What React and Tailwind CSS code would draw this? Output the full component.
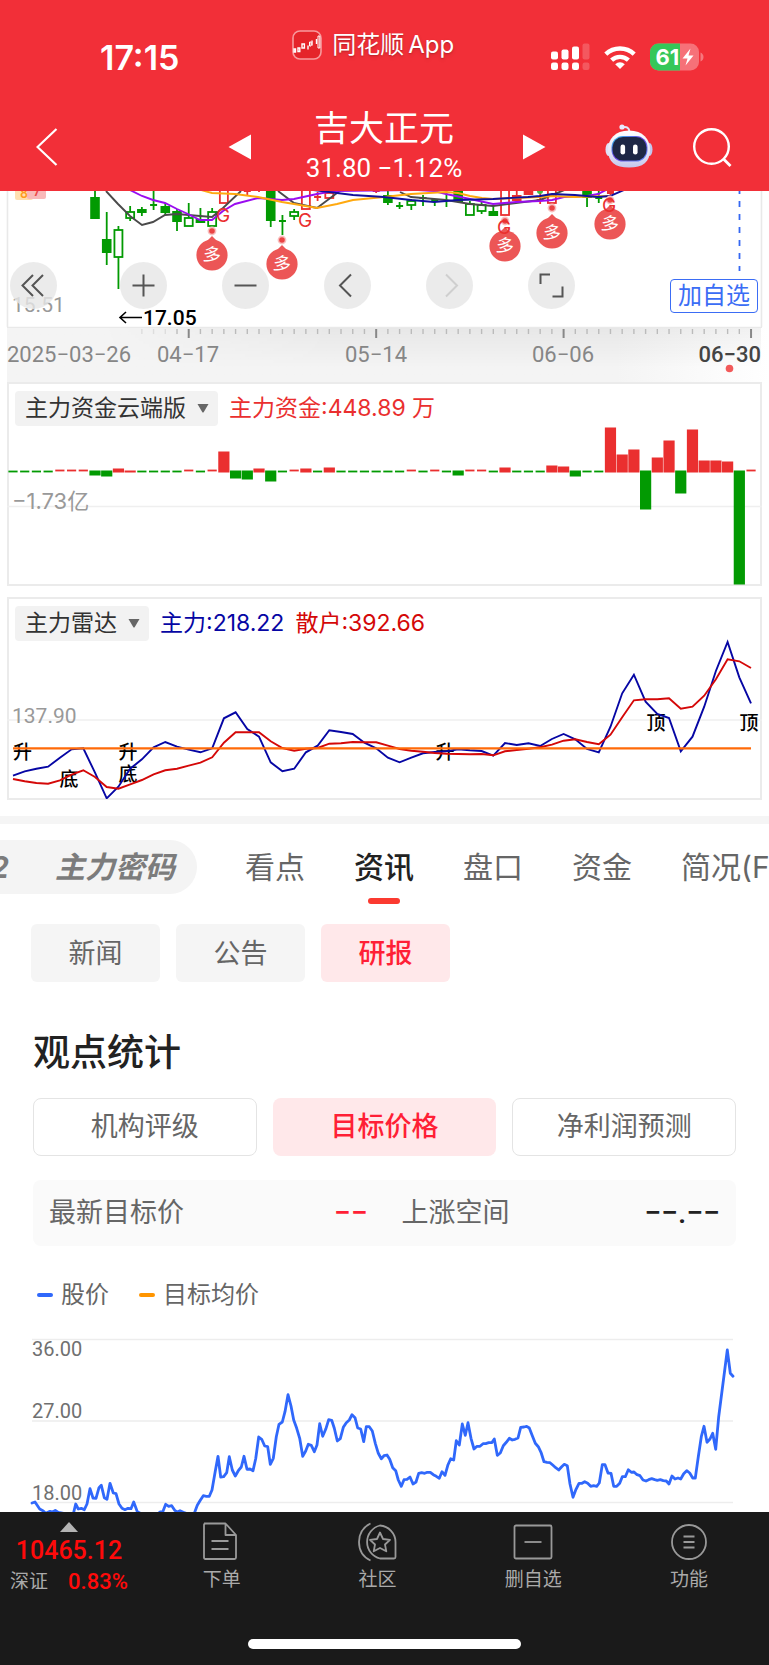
import React from "react";

const SANS = "font-['Inter','Noto_Sans_CJK_SC',sans-serif]";
const NUM = "font-['Roboto','Noto_Sans_CJK_SC',sans-serif]";

/* x position of the n-th trading day on the daily charts */
const dayX = (i) => 13 + i * 11.715;

/* [day, colour, wick top, wick bottom, body top, body bottom, style] */
const CANDLES = [
  [7, "g", 0, 28, 6, 28, "fill"],
  [8, "g", 21, 74, 48, 62, "fill"],
  [9, "g", 35, 98, 39, 66, "hollow"],
  [10, "g", 15, 30, 21, 27, "hollow"],
  [11, "g", 16, 25, 18, 22, "fill"],
  [12, "g", -2, 19, 13, 15, "cross"],
  [13, "g", 12, 24, 15, 22, "fill"],
  [14, "g", 18, 40, 20, 31, "fill"],
  [15, "g", 12, 34, 27, 35, "hollow"],
  [16, "g", 17, 32, 28, 32, "fill"],
  [17, "g", 17, 34, 21, 35, "hollow"],
  [18, "r", -4, -3, -5, 12, "hollow"],
  [20, "r", -5, 4, -4, 1, "cross"],
  [21, "r", -5, 1, -4, 0, "cross"],
  [22, "g", -5, 36, -5, 30, "fill"],
  [23, "g", 24, 44, 29, 31, "cross"],
  [24, "g", 18, 29, 21, 25, "hollow"],
  [25, "r", -5, 12, -5, 18, "hollow"],
  [26, "r", 1, 10, 5, 7, "cross"],
  [27, "r", -5, 6, 2, 7, "hollow"],
  [31, "r", -5, 2, -3, 1, "cross"],
  [32, "g", -3, 14, 4, 12, "fill"],
  [33, "g", 11, 18, 14, 16, "cross"],
  [34, "g", 8, 19, 10, 14, "hollow"],
  [35, "g", 4, 15, 6, 8, "cross"],
  [36, "g", 8, 15, 8, 10, "cross"],
  [37, "g", -2, 16, -4, 0, "cross"],
  [38, "g", -3, 11, -3, 11, "fill"],
  [39, "g", 10, 20, 13, 24, "hollow"],
  [40, "g", 11, 23, 14, 20, "hollow"],
  [41, "g", 15, 24, 20, 25, "fill"],
  [42, "r", -5, -4, -5, 24, "hollow"],
  [43, "r", 0, 10, 4, 10, "fill"],
  [44, "r", -5, 3, -5, 4, "fill"],
  [45, "r", 2, 13, 8, 10, "cross"],
  [46, "r", -5, -4, -5, 12, "hollow"],
  [49, "g", -5, 16, -5, 7, "fill"],
  [50, "g", -2, 12, 6, 8, "cross"],
  [51, "r", -5, 6, -5, 3, "cross"],
];

const AVERAGES = [
  ["#4a4a4a", "106,0 118,13 130,25 142,34 153,31 165,24 177,23 200,25 212,26 223,17 241,0"],
  ["#4a4a4a", "278,0 294,12 317,17 337,2 345,-4"],
  ["#4a4a4a", "400,1 411,6 446,9 470,13 493,15 516,12 540,9 557,2 567,-2"],
  ["#9a0cf0", "130,-1 142,5 153,9 165,12 177,18 188,23 200,29 212,29 223,20 235,13 258,7 282,9 294,8 317,3 334,0 417,-1 434,0 446,3 470,8 493,13 516,11 540,10 552,9 564,6 587,5 598,3 606,-1"],
  ["#ffa90f", "201,-1 212,2 235,3 258,6 282,11 294,13 317,17 337,13 353,9 384,6 411,3 446,1 458,2 470,5 482,7 493,8 516,7 540,6 552,5 575,6 610,5"],
  ["#10109c", "313,-1 353,4 384,6 411,9 434,11 458,9 493,8 528,6 540,5 552,3 575,4 598,6 610,5 624,-1"],
];

const PINS = [
  [212, 40, 64],
  [282, 49, 73],
  [505, 30, 55],
  [552, 17, 42],
  [610, 9, 33],
];

const G_MARKS = [[223, 31], [305, 36], [504, 43], [609, 21]];

function Candle({ c }) {
  const [i, tone, w1, w2, b1, b2, kind] = c;
  const x = dayX(i);
  const color = tone === "g" ? "#029a02" : "#ea2f2f";
  const half = 4;
  if (kind === "hollow") {
    return (
      <g stroke={color} strokeWidth="1.8" fill="none">
        {w1 < b1 && <path d={`M${x} ${w1}V${b1}`} />}
        {w2 > b2 && <path d={`M${x} ${b2}V${w2}`} />}
        <rect x={x - half} y={b1} width={half * 2} height={b2 - b1} />
      </g>
    );
  }
  const w = kind === "cross" ? 7 : 9.6;
  return (
    <g>
      <path d={`M${x} ${w1}V${w2}`} stroke={color} strokeWidth="1.8" />
      <rect x={x - w / 2} y={b1} width={w} height={b2 - b1} fill={color} />
    </g>
  );
}

function CandleChart() {
  return (
    <svg viewBox="0 0 769 137" className={`block w-full h-auto ${NUM}`} role="img" aria-label="日K线">
      <path d="M7.5 0V136M7 136.5H762M761.5 0V136" stroke="#e9e9e9" strokeWidth="1.6" fill="none" />
      <rect x="15" y="-4" width="18" height="13" rx="2" fill="#ffdfb0" />
      <rect x="27" y="-4" width="19" height="12" rx="2" fill="#f9b9b9" />
      <text x="20" y="7" fontSize="14" fontWeight="500" fill="#ff9a1f">8</text>
      <text x="33" y="5" fontSize="14" fontWeight="500" fill="#ea4a4a">7</text>
      {CANDLES.map((c) => <Candle key={c[0]} c={c} />)}
      <circle cx="540" cy="0" r="3" fill="#44b944" />
      {AVERAGES.map(([color, pts]) => (
        <polyline key={pts} points={pts} fill="none" stroke={color} strokeWidth="1.9" />
      ))}
      {PINS.map(([x, dot, cy]) => (
        <g key={x}>
          <circle cx={x} cy={dot} r="4.4" fill="#f8c0c0" />
          <circle cx={x} cy={dot} r="2.8" fill="#ea4444" />
          <path d={`M${x} ${cy - 19}L${x + 7} ${cy - 12}H${x - 7}Z`} fill="#ec5656" />
          <circle cx={x} cy={cy} r="15.6" fill="#ec5656" />
          <text x={x} y={cy + 6} fontSize="18" textAnchor="middle" fill="#fff" transform={`rotate(8 ${x} ${cy})`}>多</text>
        </g>
      ))}
      {G_MARKS.map(([x, y]) => (
        <text key={x} x={x} y={y} fontSize="19" textAnchor="middle" fill="#ea2f2f" className="font-['Inter',sans-serif]">G</text>
      ))}
      <path d="M739.5 0V80" stroke="#3568f2" strokeWidth="1.8" strokeDasharray="6 7" strokeDashoffset="3" />
      <text x="12" y="121" fontSize="21" fill="#999">15.51</text>
      <path d="M142 126.500H120M126 121L120 126.500L126 132" fill="none" stroke="#000" strokeWidth="1.6" />
      <text x="143" y="134" fontSize="21" fontWeight="500" fill="#000">17.05</text>
    </svg>
  );
}

function RoundButton({ label, muted, children }) {
  return (
    <button type="button" aria-label={label} className="flex size-[47px] items-center justify-center rounded-full bg-[#e6e6e6]/80">
      <svg viewBox="0 0 47 47" className="size-full" fill="none" stroke={muted ? "#cfcfcf" : "#555"} strokeWidth="2">
        {children}
      </svg>
    </button>
  );
}

function KLinePanel() {
  return (
    <section className="relative">
      <CandleChart />
      <div className="absolute inset-x-0 top-[71px] flex items-center gap-[55px] pl-[10px]">
        <div className="mr-2 flex"><RoundButton label="收起"><path d="M33 13L22.500 23.500L33 34M23 13L12.500 23.500L23 34" /></RoundButton></div>
        <RoundButton label="放大"><path d="M12.500 23.500H34.500M23.500 12.500V34.500" /></RoundButton>
        <RoundButton label="缩小"><path d="M12.500 23.500H34.500" /></RoundButton>
        <RoundButton label="向前"><path d="M27 12.500L16 23.500L27 34.500" /></RoundButton>
        <RoundButton label="向后" muted><path d="M20 12.500L31 23.500L20 34.500" /></RoundButton>
        <RoundButton label="全屏"><path d="M12.500 22V12.500H22M34.500 24.500V34.500H24.500" /></RoundButton>
      </div>
      <button type="button" className="absolute right-[11px] bottom-[15px] h-[34px] rounded-[4px] border border-[#3b6df5] bg-white px-[7px] text-2xl leading-8 text-[#3b6df5]">
        加自选
      </button>
    </section>
  );
}

function DateAxis() {
  const ticks = [];
  for (let i = 11; i < 64; i++) ticks.push(i);
  const major = [15, 31, 47, 63];
  return (
    <div className="ml-[7px] h-[56px] bg-linear-to-r from-[#f4f4f4] via-[#f4f4f4] via-80% to-white">
      <svg viewBox="7 0 762 56" className={`block w-full h-auto ${NUM}`} fontSize="22" fill="#868686" role="img" aria-label="日期轴">
        <defs>
          <linearGradient id="axisShade" x1="0" y1="0" x2="0" y2="1">
            <stop offset="0" stopColor="#000" stopOpacity="0.05" />
            <stop offset="1" stopColor="#000" stopOpacity="0" />
          </linearGradient>
          <linearGradient id="axisFade">
            <stop offset="0" stopColor="#000" />
            <stop offset=".35" stopColor="#fff" />
          </linearGradient>
          <mask id="axisMask"><rect x="100" y="0" width="661" height="40" fill="url(#axisFade)" /></mask>
        </defs>
        <rect x="100" y="0" width="661" height="40" fill="url(#axisShade)" mask="url(#axisMask)" />
        {ticks.map((i) => (
          <path key={i} d={`M${dayX(i)} 1V${major.includes(i) ? 10 : 6}`} stroke={major.includes(i) ? "#888" : i < 14 ? "#ddd" : "#bbb"} strokeWidth={major.includes(i) ? 2 : 1.4} />
        ))}
        <text x="7" y="34">2025−03−26</text>
        <text x="157" y="34">04−17</text>
        <text x="376" y="34" textAnchor="middle">05−14</text>
        <text x="563" y="34" textAnchor="middle">06−06</text>
        <text x="761" y="34" textAnchor="end" fill="#444" fontWeight="500">06−30</text>
        <circle cx="729.500" cy="40.500" r="3.800" fill="#f25a5a" />
      </svg>
    </div>
  );
}

/* daily fund flow: pixels above (r) or below (g) the zero line; no number is a flat day */
const FLOW = "g g g g r r r g5 g6 r4 r2 g g g g r g r r21 g8 g9 r4 g11 g r r4 g r5 g g g g g g r g r g g5 r r g r5 g g g r7 r6 g6 g g r45 r18 r23 g39 r15 r32 g23 r43 r12 r12 r11 g114 r"
  .split(" ")
  .map((s) => ({ up: s[0] === "r", h: Number(s.slice(1) || 0) }));

function FlowChart() {
  return (
    <svg viewBox="0 0 755 202" className={`block w-full h-auto ${SANS}`} role="img" aria-label="主力资金云端版">
      <path d="M0 123.500H755" stroke="#efefef" strokeWidth="1.6" />
      {FLOW.map((d, i) => {
        const x = dayX(i) - 7;
        if (d.h === 0) return <path key={i} d={`M${x - 4.600} ${d.up ? 87.500 : 88.500}h9.200`} stroke={d.up ? "#ea2f2f" : "#029a02"} strokeWidth="1.800" />;
        return <rect key={i} x={x - 5.600} y={d.up ? 89.500 - d.h : 87.500} width="11.200" height={d.h} fill={d.up ? "#ea2f2f" : "#029a02"} />;
      })}
      <text x="5" y="126" fontSize="22" fill="#999">−1.73亿</text>
    </svg>
  );
}

const MAIN_FORCE = [557, 544, 536, 530, 503, 478, 475, 548, 625, 590, 536, 508, 472, 456, 470, 479, 487, 475, 385, 367, 417, 440, 517, 544, 536, 487, 467, 421, 426, 432, 458, 475, 503, 517, 503, 490, 486, 484, 478, 481, 483, 497, 459, 465, 460, 468, 447, 432, 448, 477, 487, 410, 310, 254, 335, 372, 384, 484, 440, 350, 243, 156, 262, 340];
const RETAIL = [567, 574, 579, 581, 571, 554, 541, 561, 591, 596, 583, 570, 553, 541, 536, 527, 518, 502, 458, 427, 427, 427, 454, 474, 482, 476, 474, 461, 460, 456, 457, 457, 467, 477, 482, 485, 489, 491, 492, 493, 492, 496, 484, 480, 476, 472, 464, 452, 448, 456, 463, 434, 382, 331, 328, 328, 325, 356, 350, 317, 268, 208, 214, 234];
const daily = (values) => values.map((v, i) => `${(dayX(i) - 7).toFixed(1)},${(v / 3 - 8).toFixed(1)}`).join(" ");

const SIGNALS = [["升", 15.500, 161], ["底", 62, 188], ["升", 121, 161], ["底", 121, 183], ["升", 438, 161], ["顶", 649, 132], ["顶", 742, 132]];

function RadarChart() {
  return (
    <svg viewBox="0 0 755 201" className={`block w-full h-auto ${NUM}`} role="img" aria-label="主力雷达">
      <path d="M0 122H755" stroke="#efefef" strokeWidth="1.600" />
      <text x="5" y="125" fontSize="21" fill="#999">137.90</text>
      {SIGNALS.map(([t, x, y], i) => (
        <text key={i} x={x} y={y} fontSize="19" textAnchor="middle" fill="#000" fontWeight="500">{t}</text>
      ))}
      <polyline points={daily(MAIN_FORCE)} fill="none" stroke="#0606a4" strokeWidth="1.900" />
      <polyline points={daily(RETAIL)} fill="none" stroke="#d40808" strokeWidth="1.900" />
      <path d="M6 150.300H744" stroke="#ff6a08" strokeWidth="2.200" />
    </svg>
  );
}

function IndicatorSelect({ name }) {
  return (
    <span className="relative flex">
      <select aria-label={name} className="h-[35px] appearance-none rounded-[4px] bg-[#f2f2f2] pr-8 pl-[10px] text-[23px] leading-[35px] text-[#333] outline-none">
        <option>{name}</option>
      </select>
      <svg viewBox="0 0 12 9" className="pointer-events-none absolute top-[13px] right-[9px] h-[9px] w-3" fill="#666">
        <path d="M0.500 0H11.500L6.800 8Q6 9 5.200 8Z" />
      </svg>
    </span>
  );
}

function IndicatorPanel({ name, values, className, children }) {
  return (
    <section className={`relative mx-[7px] border-2 border-[#ebebeb] ${className}`}>
      <div className="-mx-[2px] -my-[1px]">{children}</div>
      <div className="absolute top-[7px] left-[6px] flex items-center gap-[11px] text-[23px] leading-[35px] whitespace-nowrap">
        <IndicatorSelect name={name} />
        {values}
      </div>
    </section>
  );
}

/* price history, in thirds of a chart pixel; the second half starts at x = 1152 */
const PRICE_A = "96,549 105,546 119,567 130,573 137,580 150,574 158,576 166,571 175,577 200,582 220,582 227,552 235,567 244,565 253,569 261,552 270,506 279,534 288,535 297,503 304,496 313,533 321,538 330,490 340,519 348,521 357,552 366,565 375,569 384,565 393,566 401,546 412,575 425,582 435,580 445,584 470,584 480,576 488,576 497,553 506,559 515,557 524,571 532,576 540,572 550,577 570,584 583,580 592,556 601,541 610,527 619,529 628,529 636,510 645,458 654,409 662,471 671,470 680,458 688,410 697,450 706,468 715,452 724,441 732,409 741,448 750,447 759,452 767,416 776,351 785,358 794,378 803,380 811,433 820,415 829,350 837,313 847,306 855,275 864,224 873,258 881,300 890,325 899,355 908,409 917,393 925,373 934,376 943,395 951,375 959,311 968,349 977,328 986,299 995,301 1003,325 1012,363 1021,356 1030,322 1039,308 1048,300 1056,284 1065,293 1073,324 1082,327 1091,365 1099,320 1108,320 1117,333 1126,370 1135,400 1144,416";
const PRICE_B = "0,407 9,405 17,418 26,443 35,452 43,480 52,499 60,479 69,478 78,471 87,492 96,486 104,460 113,458 122,460 130,457 139,457 148,464 157,469 166,475 174,455 183,466 192,434 200,416 209,420 217,362 226,375 235,312 244,346 252,308 261,355 270,387 279,379 288,379 297,371 305,371 314,368 323,368 331,357 340,406 349,399 358,377 367,367 376,355 385,360 393,358 402,354 410,322 420,321 428,319 436,324 445,347 454,370 463,380 471,397 480,425 489,427 498,428 507,436 515,443 524,450 533,440 541,433 550,437 558,492 567,532 576,508 585,490 594,490 602,485 611,490 620,499 629,497 638,499 646,489 655,434 663,434 672,459 681,460 689,499 698,499 707,490 715,470 724,470 733,449 742,457 750,456 759,464 768,467 777,480 786,483 794,479 803,476 812,479 820,481 829,479 838,482 847,483 855,492 864,468 873,477 882,474 890,477 899,461 908,452 917,459 926,474 934,474 943,410 952,350 960,319 969,367 978,357 986,340 995,388 1004,290 1030,90 1039,160 1047,169";
const parse = (s, dx) => s.split(" ").map((p) => p.split(",").map(Number)).map(([x, y]) => `${((x + dx) / 3).toFixed(1)},${(y / 3 - 10).toFixed(1)}`);
const PRICE = [...parse(PRICE_A, 0), ...parse(PRICE_B, 1152)].join(" ");

function PriceChart() {
  return (
    <svg viewBox="0 0 769 182" className={`block w-full h-auto ${NUM}`} fontSize="20" fill="#707070" role="img" aria-label="股价走势">
      <path d="M32 9.500H733M32 91H733M32 172.500H733" stroke="#ededed" strokeWidth="1.500" />
      <text x="32" y="26">36.00</text>
      <text x="32" y="88">27.00</text>
      <text x="32" y="170">18.00</text>
      <polyline points={PRICE} fill="none" stroke="#3068fb" strokeWidth="2.800" strokeLinejoin="round" strokeLinecap="round" />
    </svg>
  );
}

function StatusIcons() {
  return (
    <div className="flex items-center gap-[14px]">
      <svg viewBox="0 0 39 28" className="h-7 w-[39px]" fill="#fff" aria-label="信号">
        <rect x="0" y="8.500" width="7" height="8" rx="2" />
        <rect x="10.500" y="6.500" width="7" height="10" rx="2" />
        <rect x="21" y="3.500" width="7" height="13" rx="2" />
        <rect x="31.500" y="0.500" width="7" height="16" rx="2" opacity=".2" />
        <rect x="0" y="19.500" width="7" height="7.500" rx="2.200" />
        <rect x="10.500" y="19.500" width="7" height="7.500" rx="2.200" />
        <rect x="21" y="19.500" width="7" height="7.500" rx="2.200" />
        <rect x="31.500" y="19.500" width="7" height="7.500" rx="2.200" opacity=".2" />
      </svg>
      <svg viewBox="0 0 32 24" className="h-6 w-8" fill="none" stroke="#fff" strokeWidth="4.400" aria-label="Wi-Fi">
        <path d="M1.800 9.200A20.500 20.500 0 0 1 30.200 9.200" />
        <path d="M7.600 15.200A12.300 12.300 0 0 1 24.400 15.200" />
        <path d="M16 24L11.200 19.200A7 7 0 0 1 20.800 19.200Z" fill="#fff" stroke="none" />
      </svg>
      <svg viewBox="0 0 54 28" className="h-7 w-[54px]" role="img" aria-label="电量 61%">
        <rect x="0" y="0.500" width="49" height="27" rx="8.500" fill="#fff" opacity=".32" />
        <path d="M8.500 0.500H30V27.500H8.500A8.500 8.500 0 0 1 0 19V9A8.500 8.500 0 0 1 8.500 0.500Z" fill="#35c759" />
        <path d="M50.500 9.500Q53.500 11 53.500 14T50.500 18.500Z" fill="#fff" opacity=".35" />
        <text x="5.500" y="21.500" fontSize="22" fontWeight="700" fill="#fff" className="font-['Inter',sans-serif]">61</text>
        <path d="M40.500 5.500L32.500 15.500H37.500L35.500 22.500L43.500 12.500H38.500Z" fill="#fff" />
      </svg>
    </div>
  );
}

function Robot() {
  return (
    <svg viewBox="0 0 48 44" className="h-11 w-12" aria-hidden="true">
      <defs>
        <linearGradient id="shell" x1="0" y1="0" x2="0" y2="1">
          <stop offset="0" stopColor="#fff" />
          <stop offset=".6" stopColor="#e4e4f6" />
          <stop offset="1" stopColor="#c4c6ec" />
        </linearGradient>
        <linearGradient id="visor" x1="0" y1="0" x2="1" y2="1">
          <stop offset="0" stopColor="#2fd3f0" />
          <stop offset=".45" stopColor="#6a3fe0" />
          <stop offset="1" stopColor="#5b8df5" />
        </linearGradient>
      </defs>
      <path d="M17 3.500Q24 1.500 24.500 8" fill="none" stroke="#e3e5f8" strokeWidth="2" />
      <circle cx="17" cy="3" r="2.600" fill="#e8eaff" />
      <ellipse cx="3.500" cy="25.500" rx="3" ry="6.500" fill="#dfe1f7" />
      <ellipse cx="44.500" cy="25.500" rx="3" ry="6.500" fill="#c3c7ee" />
      <path d="M24 6.500C38 6.500 45 15 45 26C45 38 38 43.500 24 43.500S3 38 3 26C3 15 10 6.500 24 6.500Z" fill="url(#shell)" />
      <rect x="6.500" y="12" width="36" height="25.500" rx="11.500" fill="url(#visor)" />
      <rect x="7.500" y="13" width="34" height="23.500" rx="10.500" fill="#1e2745" />
      <rect x="15.500" y="20.500" width="4.600" height="10" rx="2.300" fill="#fff" />
      <rect x="28" y="20.500" width="4.600" height="10" rx="2.300" fill="#fff" />
    </svg>
  );
}

function Header() {
  return (
    <header className="h-[191px] bg-[#f22f38] text-white">
      <div className="flex h-[107px] items-start pt-[29px] pr-[65px] pl-[100px]">
        <time className="pt-[9px] text-[34px] leading-10 font-semibold">17:15</time>
        <div className="flex flex-1 items-center justify-center gap-[10px] pl-4 text-2xl leading-8 text-shadow-md">
          <svg viewBox="0 0 30 30" className="size-[30px]" fill="none" stroke="#fff" aria-hidden="true">
            <rect x="1" y="1" width="28" height="28" rx="7" fill="#e5242a" stroke="#f79a9d" strokeWidth="1.600" />
            <path d="M2 19h1.500v3H2zM6 18h1.800v3.500H6zM10 14h2.400v4H10zM16 15.500v4M20 10.500v5M24.500 9v5" strokeWidth="1.400" />
            <path d="M17.500 12h1.500v4h-1.500zM26 6h1.800v12H26z" strokeWidth="1" />
          </svg>
          <span className="flex gap-1"><span>同花顺</span><span>App</span></span>
        </div>
        <div className="pt-[14px]"><StatusIcons /></div>
      </div>
      <nav className="flex h-[84px] items-start pr-[37px] pl-9" aria-label="个股导航">
        <button type="button" aria-label="返回" className="mt-[21px]">
          <svg viewBox="0 0 22 38" className="h-[38px] w-[22px]" fill="none" stroke="#fff" strokeWidth="2.200"><path d="M20.500 1L1.500 19L20.500 37" /></svg>
        </button>
        <div className="ml-auto flex items-start">
          <button type="button" aria-label="上一只" className="mt-[27px]">
            <svg viewBox="0 0 23 26" className="h-[26px] w-[23px]" fill="#fff"><path d="M23 0.500V25.500L0.500 13Z" /></svg>
          </button>
          <div className="w-[272px] pr-[6px] text-center">
            <h1 className="text-[35px] leading-[42px]">吉大正元</h1>
            <p className={`text-[26px] leading-[38px] ${NUM}`}>31.80 −1.12%</p>
          </div>
          <button type="button" aria-label="下一只" className="mt-[27px]">
            <svg viewBox="0 0 23 26" className="h-[26px] w-[23px]" fill="#fff"><path d="M0 0.500V25.500L22.500 13Z" /></svg>
          </button>
        </div>
        <button type="button" aria-label="智能助手" className="mt-[17px] ml-[59px]"><Robot /></button>
        <button type="button" aria-label="搜索" className="mt-[21px] ml-10">
          <svg viewBox="0 0 39 39" className="size-[39px]" fill="none" stroke="#fff" strokeWidth="2.400"><circle cx="18.500" cy="18.500" r="17.300" /><path d="M30.500 31L37.500 38" strokeWidth="2.800" /></svg>
        </button>
      </nav>
    </header>
  );
}

function Tabs() {
  const tabs = ["看点", "资讯", "盘口", "资金", "简况(F10)"];
  return (
    <nav className="flex items-start overflow-hidden pt-4 whitespace-nowrap" aria-label="栏目">
      <div className="flex h-[54px] w-[197px] shrink-0 items-center justify-end gap-[46px] overflow-hidden rounded-r-full bg-[#f4f4f4] pr-[22px] text-[30px] font-bold text-[#7c7c7c] italic">
        <button type="button">L2</button>
        <button type="button">主力密码</button>
      </div>
      <div className="ml-12 flex shrink-0 gap-[49px]">
        {tabs.map((t) => (
          <button key={t} type="button" className={`flex h-16 flex-col items-center justify-between text-[30px] leading-[54px] ${t === "资讯" ? "font-medium text-[#222]" : "text-[#666]"}`}>
            {t}
            {t === "资讯" && <span className="h-[6px] w-8 shrink-0 rounded-[3px] bg-[#fb3a30]" />}
          </button>
        ))}
      </div>
    </nav>
  );
}

function NewsFilters() {
  return (
    <div className="mt-5 flex gap-4 pl-[31px] text-[27px]">
      {["新闻", "公告", "研报"].map((t) => (
        <button key={t} type="button" className={`h-[58px] w-[129px] rounded-md pt-[2px] ${t === "研报" ? "bg-[#ffe8ea] font-medium text-[#ff1f36]" : "bg-[#f5f5f5] text-[#666]"}`}>{t}</button>
      ))}
    </div>
  );
}

function Opinions() {
  return (
    <section className="px-[33px]">
      <h2 className="mt-11 text-[37px] leading-[54px] font-medium text-[#222]">观点统计</h2>
      <div className="mt-[18px] grid grid-cols-3 gap-4 text-[27px]">
        {["机构评级", "目标价格", "净利润预测"].map((t) => (
          <button key={t} type="button" className={`h-[58px] rounded-lg ${t === "目标价格" ? "bg-[#ffe8ea] font-medium text-[#ff1f36]" : "border border-[#e4e4e4] text-[#666]"}`}>{t}</button>
        ))}
      </div>
      <dl className="mt-6 grid h-[66px] grid-cols-2 items-center gap-[34px] rounded-lg bg-[#fafafa] px-4 text-[27px] text-[#666]">
        <div className="flex items-center justify-between">
          <dt>最新目标价</dt>
          <dd className={`text-3xl font-medium text-[#ff1f36] ${NUM}`}>−−</dd>
        </div>
        <div className="flex items-center justify-between">
          <dt>上涨空间</dt>
          <dd className={`text-3xl font-medium text-[#222] ${NUM}`}>−−.−−</dd>
        </div>
      </dl>
      <ul className="mt-8 flex gap-[30px] pl-1 text-2xl leading-[34px] text-[#666]">
        <li className="flex items-center gap-2"><span className="h-1 w-4 rounded-[2px] bg-[#3068fb]" />股价</li>
        <li className="flex items-center gap-2"><span className="h-1 w-4 rounded-[2px] bg-[#ff9500]" />目标均价</li>
      </ul>
    </section>
  );
}

const BAR_ITEMS = [
  ["下单", <g key="o"><path d="M2 1.500H23.500L34 13V35.500Q34 37 32.500 37H3.500Q2 37 2 35.500V3Q2 1.500 3.500 1.500M23.500 1.500V13H34" /><path d="M9.500 19H26.500M9.500 27H26.500" /></g>],
  ["社区", <g key="c"><path d="M22 3.500A17 17 0 0 0 22 36.500H36Q37.500 36.500 37.500 35V20A17 16.500 0 0 0 22 3.500Z" /><path d="M12.500 1.500Q1 7 1 20T12.500 38.500" /><path d="M22 10.500L25 17L32 17.800L27 22.500L28.300 29.300L22 26L15.700 29.300L17 22.500L12 17.800L19 17Z" /></g>],
  ["删自选", <g key="d"><rect x="1.500" y="3.500" width="37" height="33" rx="1.500" /><path d="M11.500 20H28.500" /></g>],
  ["功能", <g key="f"><circle cx="20" cy="20" r="17" /><path d="M14.500 14.500H25.500M14.500 20H25.500M14.500 25.500H25.500" /></g>],
];

function BottomBar() {
  return (
    <footer className="bg-[#1a1a1a] pt-2 pb-4 text-[#aaa]">
      <div className="flex h-[96px] items-start pr-[2px]">
        <button type="button" className="flex w-[144px] shrink-0 flex-col items-center pr-[6px] text-[#ff0a0a]">
          <svg viewBox="0 0 18 10" className="mt-[2px] h-[10px] w-[18px]" fill="#b4b4b4"><path d="M9 0L18 10H0Z" /></svg>
          <span className={`text-[25px] leading-[38px] font-medium ${NUM}`}>10465.12</span>
          <span className="flex items-center gap-5 leading-6 whitespace-nowrap">
            <span className="text-[19px] text-[#aaa]">深证</span>
            <span className={`text-[22px] font-medium ${NUM}`}>0.83%</span>
          </span>
        </button>
        {BAR_ITEMS.map(([label, icon]) => (
          <button key={label} type="button" className="flex flex-1 flex-col items-center text-[19px] leading-7">
            <svg viewBox="0 0 40 40" className="mt-[2px] size-10" fill="none" stroke="#999" strokeWidth="1.800" strokeLinejoin="round">{icon}</svg>
            <span className="mt-1">{label}</span>
          </button>
        ))}
      </div>
      <div className="mx-auto mt-[23px] h-[10px] w-[273px] rounded-full bg-white" />
    </footer>
  );
}

export default function App() {
  return (
    <div className={`flex min-h-screen flex-col overflow-x-hidden bg-white ${SANS}`}>
      <Header />
      <main className="flex-1">
        <KLinePanel />
        <DateAxis />
        <IndicatorPanel
          name="主力资金云端版"
          className="-mt-[2px]"
          values={<span className="text-[#ea2f2f]">主力资金:448.89 万</span>}
        >
          <FlowChart />
        </IndicatorPanel>
        <IndicatorPanel
          name="主力雷达"
          className="mt-[11px]"
          values={<><span className="text-[#0606a4]">主力:218.22</span><span className="text-[#d40808]">散户:392.66</span></>}
        >
          <RadarChart />
        </IndicatorPanel>
        <div className="mt-4 h-2 bg-[#f5f5f5]" />
        <Tabs />
        <NewsFilters />
        <Opinions />
        <div className="mt-[18px]"><PriceChart /></div>
      </main>
      <BottomBar />
    </div>
  );
}
